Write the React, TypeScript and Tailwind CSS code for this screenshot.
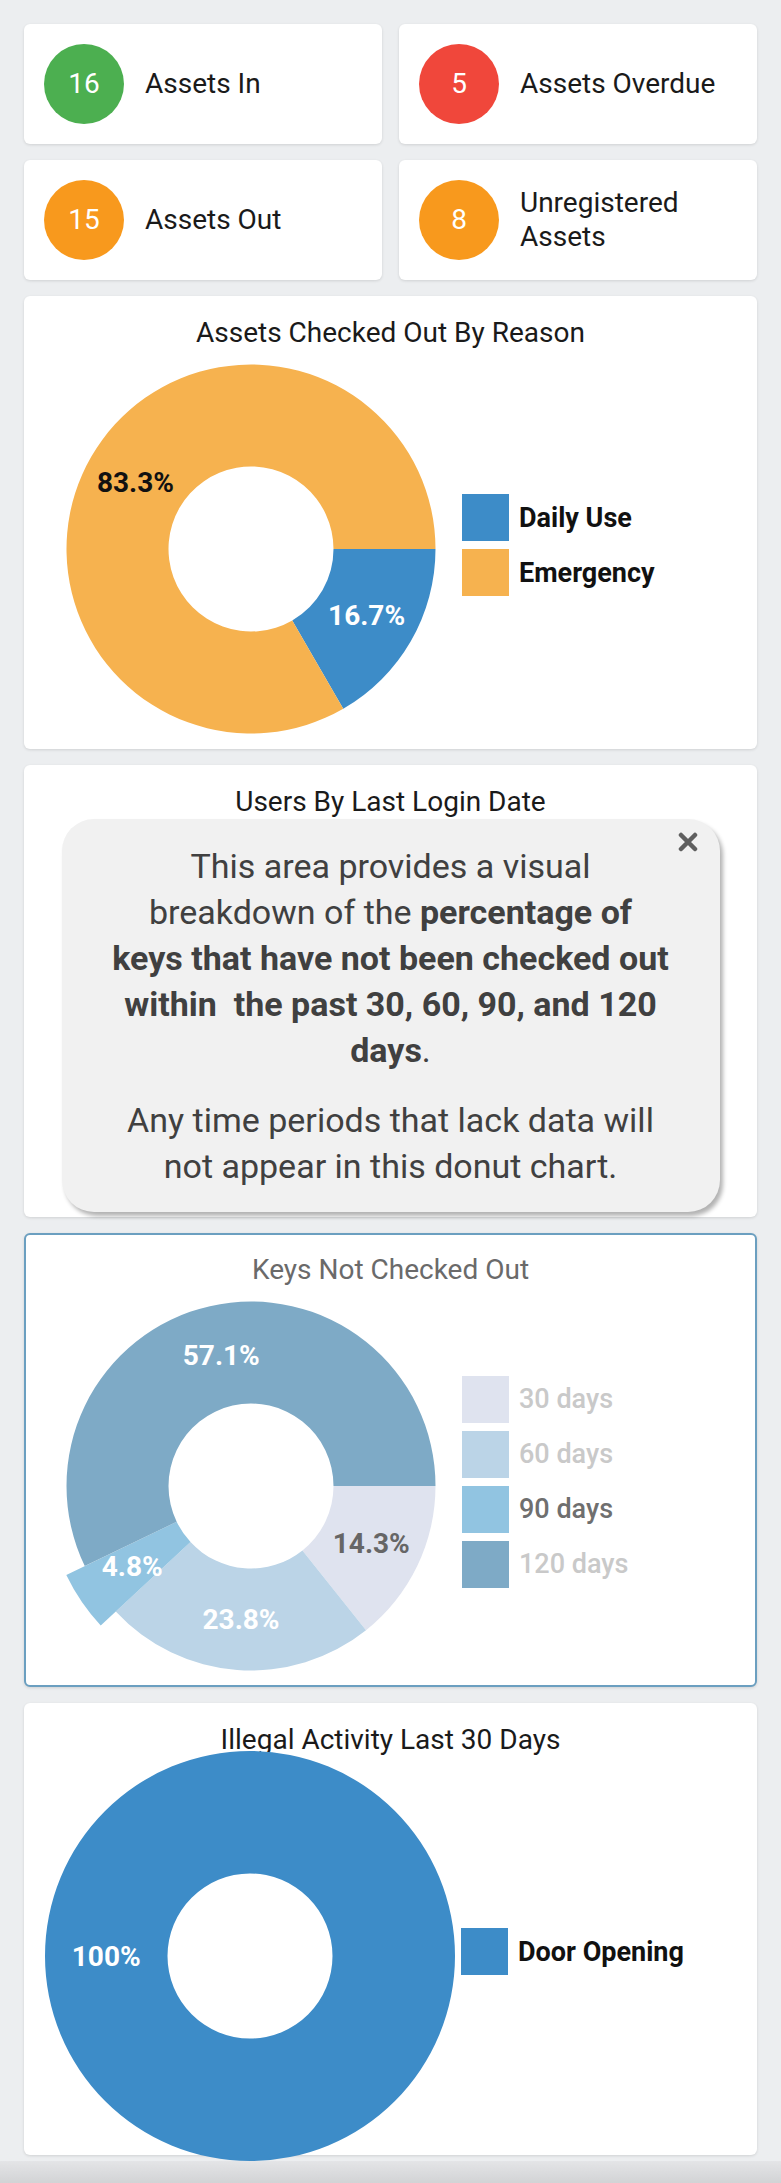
import React from 'react';

type Slice = {
  label: string;
  value: number;
  color: string;
  labelColor: string;
  hovered?: boolean;
};

// geometry of every donut (svg is 370x370)
const CX = 185;
const CY = 185;
const R_IN = 82.5;
const R_OUT = 184.5;
const R_HOVER = 205;

const pt = (r: number, deg: number) => [
  CX + r * Math.cos((deg * Math.PI) / 180),
  CY + r * Math.sin((deg * Math.PI) / 180),
];

const arcPath = (a0: number, a1: number, r0: number, r1: number) => {
  if (a1 - a0 >= 359.99) {
    return `M ${CX + r1} ${CY} A ${r1} ${r1} 0 1 1 ${CX - r1} ${CY} A ${r1} ${r1} 0 1 1 ${CX + r1} ${CY} Z M ${CX + r0} ${CY} A ${r0} ${r0} 0 1 0 ${CX - r0} ${CY} A ${r0} ${r0} 0 1 0 ${CX + r0} ${CY} Z`;
  }
  const large = a1 - a0 > 180 ? 1 : 0;
  const [x0, y0] = pt(r1, a0);
  const [x1, y1] = pt(r1, a1);
  const [x2, y2] = pt(r0, a1);
  const [x3, y3] = pt(r0, a0);
  return `M ${x0} ${y0} A ${r1} ${r1} 0 ${large} 1 ${x1} ${y1} L ${x2} ${y2} A ${r0} ${r0} 0 ${large} 0 ${x3} ${y3} Z`;
};

const Donut = ({ slices }: { slices: Slice[] }) => {
  const total = slices.reduce((s, x) => s + x.value, 0);
  let start = 0;
  const arcs = slices.map((s) => {
    const sweep = (s.value / total) * 360;
    const a0 = start;
    const a1 = start + sweep;
    start = a1;
    const rOut = s.hovered ? R_HOVER : R_OUT;
    const mid = (a0 + a1) / 2;
    const [lx, ly] = pt((R_IN + rOut) / 2, mid);
    const pct = (s.value / total) * 100;
    const text = pct === 100 ? '100%' : `${pct.toFixed(1)}%`;
    return { ...s, d: arcPath(a0, a1, R_IN, rOut), lx, ly, text };
  });

  return (
    <svg width="370" height="370" viewBox="0 0 370 370" className="shrink-0 overflow-visible">
      {arcs.map((a) => (
        <path key={a.label} d={a.d} fill={a.color} fillRule="evenodd" />
      ))}
      {arcs.map((a) => (
        <text
          key={a.label + '-t'}
          x={a.lx}
          y={a.ly}
          textAnchor="middle"
          dominantBaseline="central"
          fontSize="28"
          fontWeight="700"
          fill={a.labelColor}
        >
          {a.text}
        </text>
      ))}
    </svg>
  );
};

type LegendItem = { label: string; color: string; textColor: string };

const Legend = ({ items, weight }: { items: LegendItem[]; weight: string }) => (
  <div className="ml-[26px] mb-2 flex flex-col gap-2">
    {items.map((it) => (
      <div key={it.label} className="flex items-center gap-[10px]">
        <div className="w-[47px] h-[47px]" style={{ backgroundColor: it.color }}></div>
        <span className={`text-[27px] leading-[32px] ${weight}`} style={{ color: it.textColor }}>
          {it.label}
        </span>
      </div>
    ))}
  </div>
);

const stats = [
  { n: 16, label: 'Assets In', color: 'bg-[#4caf50]' },
  { n: 5, label: 'Assets Overdue', color: 'bg-[#f0473b]' },
  { n: 15, label: 'Assets Out', color: 'bg-[#f8991d]' },
  { n: 8, label: 'Unregistered Assets', color: 'bg-[#f8991d]' },
];

const reasonSlices: Slice[] = [
  { label: 'Daily Use', value: 1, color: '#3d8cc8', labelColor: '#ffffff' },
  { label: 'Emergency', value: 5, color: '#f6b24f', labelColor: '#111111' },
];

const keySlices: Slice[] = [
  { label: '30 days', value: 3, color: '#dfe3ef', labelColor: '#666666' },
  { label: '60 days', value: 5, color: '#bbd4e7', labelColor: '#ffffff' },
  { label: '90 days', value: 1, color: '#91c4e1', labelColor: '#ffffff', hovered: true },
  { label: '120 days', value: 12, color: '#7eaac6', labelColor: '#ffffff' },
];

const illegalSlices: Slice[] = [
  { label: 'Door Opening', value: 1, color: '#3d8cc8', labelColor: '#ffffff', hovered: true },
];

const App = () => {
  return (
    <div className="min-h-screen bg-[#eceef0] font-['Roboto',sans-serif]">
      <div className="px-6 pt-6 flex flex-col gap-4">
        {/* stat tiles */}
        <div className="grid grid-cols-2 gap-x-[17px] gap-y-4">
          {stats.map((s) => (
            <div
              key={s.label}
              className="h-[120px] bg-white rounded-md shadow-[0_1px_3px_rgba(0,0,0,0.12)] flex items-center px-5 gap-[21px]"
            >
              <div
                className={`w-20 h-20 shrink-0 rounded-full ${s.color} flex items-center justify-center text-white text-[28px]`}
              >
                {s.n}
              </div>
              <span className="text-[28px] leading-[34px] text-[#1a1a1a] w-[200px]">{s.label}</span>
            </div>
          ))}
        </div>

        {/* assets checked out by reason */}
        <div className="h-[453px] bg-white rounded-md shadow-[0_1px_3px_rgba(0,0,0,0.12)]">
          <div className="pt-[21px] text-center text-[28px] leading-[32px] text-[#1a1a1a]">
            Assets Checked Out By Reason
          </div>
          <div className="h-[400px] flex items-center pl-[42px]">
            <Donut slices={reasonSlices} />
            <Legend
              weight="font-bold"
              items={[
                { label: 'Daily Use', color: '#3d8cc8', textColor: '#111111' },
                { label: 'Emergency', color: '#f6b24f', textColor: '#111111' },
              ]}
            />
          </div>
        </div>

        {/* users by last login date, covered by the help popup */}
        <div className="h-[452px] bg-white rounded-md shadow-[0_1px_3px_rgba(0,0,0,0.12)]">
          <div className="pt-[21px] text-center text-[28px] leading-[32px] text-[#1a1a1a]">
            Users By Last Login Date
          </div>
          <div className="relative mt-px mx-auto w-[658px] h-[393px] rounded-[32px] bg-[#f1f1f1] shadow-[3px_4px_4px_rgba(0,0,0,0.3)] pt-[24px] text-center text-[34px] leading-[46px] text-[#404040]">
            <svg
              width="20"
              height="20"
              viewBox="0 0 20 20"
              className="absolute right-[22px] top-[13px]"
            >
              <path d="M3 3 L17 17 M17 3 L3 17" stroke="#5f5f5f" strokeWidth="4.5" strokeLinecap="round" />
            </svg>
            <p>
              This area provides a visual
              <br />
              breakdown of the <b>percentage of</b>
              <br />
              <b>keys that have not been checked out</b>
              <br />
              <b>within&nbsp; the past 30, 60, 90, and 120</b>
              <br />
              <b>days</b>.
            </p>
            <p className="mt-6">
              Any time periods that lack data will
              <br />
              not appear in this donut chart.
            </p>
          </div>
        </div>

        {/* keys not checked out */}
        <div className="h-[454px] bg-white rounded-md border-2 border-[#6b9fc0] shadow-[0_1px_3px_rgba(0,0,0,0.12)]">
          <div className="pt-[19px] text-center text-[28px] leading-[32px] text-[#6a6a6a]">
            Keys Not Checked Out
          </div>
          <div className="h-[399px] flex items-center pl-[40px]">
            <Donut slices={keySlices} />
            <Legend
              weight="font-medium"
              items={[
                { label: '30 days', color: '#dfe3ef', textColor: '#c9c9c9' },
                { label: '60 days', color: '#bbd4e7', textColor: '#c9c9c9' },
                { label: '90 days', color: '#91c4e1', textColor: '#6f6f6f' },
                { label: '120 days', color: '#7eaac6', textColor: '#c9c9c9' },
              ]}
            />
          </div>
        </div>

        {/* illegal activity */}
        <div className="h-[452px] bg-white rounded-md shadow-[0_1px_3px_rgba(0,0,0,0.12)]">
          <div className="pt-[21px] text-center text-[28px] leading-[32px] text-[#1a1a1a]">
            Illegal Activity Last 30 Days
          </div>
          <div className="h-[399px] flex items-center pl-[41px]">
            <Donut slices={illegalSlices} />
            <Legend
              weight="font-bold"
              items={[{ label: 'Door Opening', color: '#3d8cc8', textColor: '#111111' }]}
            />
          </div>
        </div>
      </div>
      <div className="mt-[6px] h-[22px] bg-gradient-to-b from-[#e4e5e7] to-[#d2d3d5]"></div>
    </div>
  );
};

export default App;
